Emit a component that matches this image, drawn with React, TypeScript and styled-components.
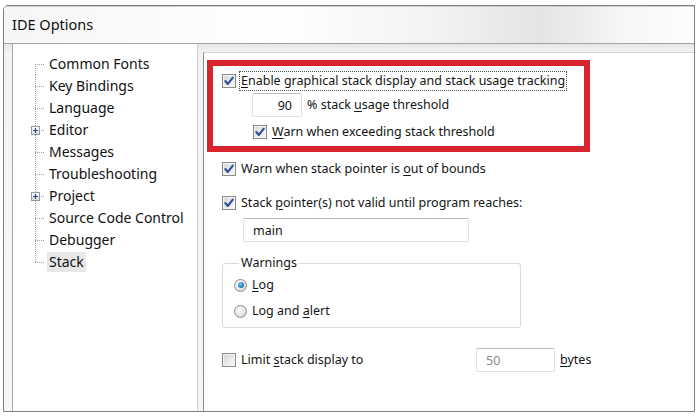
import React from "react";
import styled, { createGlobalStyle, css } from "styled-components";

const GlobalStyle = createGlobalStyle`
  html, body {
    margin: 0;
    padding: 0;
    background: #ffffff;
  }
  body {
    font-family: "Noto Sans", "Liberation Sans", sans-serif;
    color: #1c1c1c;
  }
`;

const treeItems = [
  { label: "Common Fonts" },
  { label: "Key Bindings" },
  { label: "Language" },
  { label: "Editor", expandable: true },
  { label: "Messages" },
  { label: "Troubleshooting" },
  { label: "Project", expandable: true },
  { label: "Source Code Control" },
  { label: "Debugger" },
  { label: "Stack", selected: true },
];

type Pos = "first" | "mid" | "last";

const App = () => {
  return (
    <>
      <GlobalStyle />
      <Page>
        <Dialog>
          <TitleBar>IDE Options</TitleBar>
          <Body>
            <Tree>
              {treeItems.map((item, i) => {
                const pos: Pos =
                  i === 0 ? "first" : i === treeItems.length - 1 ? "last" : "mid";
                return (
                  <TreeRow key={item.label}>
                    <Connector $pos={pos}>
                      {item.expandable && (
                        <Expander>
                          <svg width="7" height="7" viewBox="0 0 7 7">
                            <path d="M1 3.5H6M3.5 1V6" stroke="#2a4a8a" strokeWidth="1.2" />
                          </svg>
                        </Expander>
                      )}
                    </Connector>
                    <TreeLabel $selected={!!item.selected}>{item.label}</TreeLabel>
                  </TreeRow>
                );
              })}
            </Tree>

            <Panel>
              <Highlight>
                <Row>
                  <CheckBox checked />
                  <FocusLabel>
                    <Key>E</Key>nable graphical stack display and stack usage tracking
                  </FocusLabel>
                </Row>
                <Row $indent={30} $mt={2}>
                  <TextBox $width={50} $align="right">90</TextBox>
                  <Label>
                    % stack <Key>u</Key>sage threshold
                  </Label>
                </Row>
                <Row $indent={31} $mt={5}>
                  <CheckBox checked />
                  <Label>
                    <Key>W</Key>arn when exceeding stack threshold
                  </Label>
                </Row>
              </Highlight>

              <Options>
                <Row $mt={7}>
                  <CheckBox checked />
                  <Label>
                    Warn when stack pointer is <Key>o</Key>ut of bounds
                  </Label>
                </Row>
                <Row $mt={14}>
                  <CheckBox checked />
                  <Label>
                    Stack <Key>p</Key>ointer(s) not valid until program reaches:
                  </Label>
                </Row>
                <Row $indent={21} $mt={5}>
                  <TextBox $width={226}>main</TextBox>
                </Row>

                <Group>
                  <Legend>Warnings</Legend>
                  <Row>
                    <Radio checked />
                    <Label>
                      <Key>L</Key>og
                    </Label>
                  </Row>
                  <Row $mt={6}>
                    <Radio />
                    <Label>
                      Log and <Key>a</Key>lert
                    </Label>
                  </Row>
                </Group>

                <Row $mt={20}>
                  <LimitCell>
                    <CheckBox />
                    <Label>
                      Limit <Key>s</Key>tack display to
                    </Label>
                  </LimitCell>
                  <TextBox $width={79} $muted>
                    50
                  </TextBox>
                  <Label>
                    <Key>b</Key>ytes
                  </Label>
                </Row>
              </Options>
            </Panel>
          </Body>
        </Dialog>
      </Page>
    </>
  );
};

export default App;

const CheckBox = ({ checked = false }: { checked?: boolean }) => (
  <CheckFrame>
    {checked && (
      <svg width="12" height="12" viewBox="0 0 12 12">
        <path
          d="M2.3 6 L4.8 9 L9.8 2.6"
          fill="none"
          stroke="#2f4f9e"
          strokeWidth="2.1"
          strokeLinecap="round"
          strokeLinejoin="round"
        />
      </svg>
    )}
  </CheckFrame>
);

const Radio = ({ checked = false }: { checked?: boolean }) => (
  <RadioFrame>{checked && <RadioDot />}</RadioFrame>
);

const Page = styled.div`
  padding: 5px 0 0 3px;
`;

const Dialog = styled.div`
  box-sizing: border-box;
  width: 692px;
  height: 407px;
  border: 1px solid #7e7e7e;
  border-top-left-radius: 5px;
  display: flex;
  flex-direction: column;
  overflow: hidden;
  background: #f1f1f1;
`;

const TitleBar = styled.div`
  box-sizing: border-box;
  height: 38px;
  flex: none;
  display: flex;
  align-items: center;
  padding-left: 8px;
  padding-bottom: 1px;
  border-bottom: 1px solid #a4a4a4;
  font-size: 14.5px;
  color: #111111;
  background: linear-gradient(
    to right,
    #f6f6f6 0%,
    #ffffff 40%,
    #f3f3f3 62%,
    #e4e4e4 78%,
    #f7f7f7 90%,
    #fdfdfd 100%
  );
  box-shadow: inset 0 1px 0 #cfcfcf;
`;

const Body = styled.div`
  flex: 1;
  display: flex;
  padding-left: 8px;
  background: linear-gradient(#e6e6e6 0, #f3f3f3 8px, #f6f6f6 100%);
`;

const Tree = styled.div`
  box-sizing: border-box;
  width: 186px;
  flex: none;
  margin-right: 5px;
  padding: 9px 0 0 22px;
  background: #ffffff;
  border-left: 1px solid #a9a9a9;
  border-right: 1px solid #cfcfcf;
`;

const TreeRow = styled.div`
  display: flex;
  align-items: center;
  height: 22px;
`;

const dotV = "repeating-linear-gradient(to bottom, #9c9c9c 0 1px, transparent 1px 2px)";
const dotH = "repeating-linear-gradient(to right, #9c9c9c 0 1px, transparent 1px 2px)";

const Connector = styled.div<{ $pos: Pos }>`
  width: 12px;
  height: 22px;
  flex: none;
  display: flex;
  align-items: center;
  background-repeat: no-repeat;
  background-image: ${dotH}, ${dotV};
  background-size: 10px 1px,
    ${({ $pos }) => ($pos === "mid" ? "1px 22px" : $pos === "first" ? "1px 11px" : "1px 12px")};
  background-position: 0 11px,
    ${({ $pos }) => ($pos === "first" ? "0 11px" : "0 0")};
`;

const Expander = styled.div`
  box-sizing: border-box;
  width: 9px;
  height: 9px;
  margin-left: -4px;
  margin-top: 1px;
  border: 1px solid #8f9aa8;
  background: linear-gradient(#ffffff, #d9dee6);
  display: flex;
  align-items: center;
  justify-content: center;
`;

const TreeLabel = styled.span<{ $selected: boolean }>`
  font-size: 14px;
  line-height: 20px;
  padding: 0 2px;
  color: #111111;
  white-space: nowrap;
  ${({ $selected }) =>
    $selected &&
    css`
      background: #e7e7e7;
    `}
`;

const Panel = styled.div`
  flex: 1;
  margin-top: 8px;
  background: #ffffff;
  border-top: 1px solid #d4d4d4;
  border-left: 1px solid #8a8a8a;
  font-size: 12.5px;
`;

const Highlight = styled.div`
  box-sizing: border-box;
  width: 383px;
  height: 92px;
  margin: 7px 0 0 3px;
  padding: 5px 0 0 9px;
  border: 6px solid #d8242c;
`;

const Options = styled.div`
  padding-left: 18px;
`;

const Row = styled.div<{ $indent?: number; $mt?: number }>`
  display: flex;
  align-items: center;
  min-height: 20px;
  margin-left: ${({ $indent = 0 }) => $indent}px;
  margin-top: ${({ $mt = 0 }) => $mt}px;
  white-space: nowrap;
`;

const CheckFrame = styled.span`
  box-sizing: border-box;
  width: 14px;
  height: 14px;
  flex: none;
  display: flex;
  align-items: center;
  justify-content: center;
  border: 1px solid #8a8a8a;
  background: linear-gradient(135deg, #d2d2d2 0%, #ebebeb 55%, #f8f8f8 100%);
  box-shadow: inset 0 0 0 1px #f4f4f4;
`;

const RadioFrame = styled.span`
  box-sizing: border-box;
  width: 13px;
  height: 13px;
  flex: none;
  margin-left: 1px;
  border-radius: 50%;
  border: 1px solid #8b8b8b;
  background: radial-gradient(circle at 40% 35%, #ffffff 0%, #e4e4e4 55%, #c9c9c9 100%);
  display: flex;
  align-items: center;
  justify-content: center;
`;

const RadioDot = styled.span`
  width: 6px;
  height: 6px;
  border-radius: 50%;
  background: radial-gradient(circle at 40% 35%, #7fd0f0 0%, #2a8cc4 50%, #18507e 100%);
`;

const Label = styled.span`
  margin-left: 5px;
  line-height: 18px;
  color: #141414;
`;

const FocusLabel = styled(Label)`
  margin-left: 3px;
  padding: 0 1px;
  line-height: 18px;
  border: 1px dotted #4a4a4a;
`;

const Key = styled.span`
  text-decoration: underline;
  text-underline-offset: 2px;
`;

const TextBox = styled.div<{ $width: number; $align?: "left" | "right"; $muted?: boolean }>`
  box-sizing: border-box;
  width: ${({ $width }) => $width}px;
  height: 24px;
  flex: none;
  display: flex;
  align-items: center;
  justify-content: ${({ $align }) => ($align === "right" ? "flex-end" : "flex-start")};
  padding: 0 ${({ $align }) => ($align === "right" ? "9px" : "0")} 0
    ${({ $align }) => ($align === "right" ? "0" : "9px")};
  border: 1px solid #dde2e8;
  border-top-color: #b9bec6;
  border-radius: 2px;
  background: #ffffff;
  color: ${({ $muted }) => ($muted ? "#8a8a8a" : "#141414")};
`;

const Group = styled.fieldset`
  box-sizing: border-box;
  width: 299px;
  height: 72px;
  margin: 14px 0 0 0;
  padding: 5px 0 0 10px;
  border: 1px solid #d5dbe0;
  border-radius: 3px;
`;

const Legend = styled.legend`
  padding: 0 2px;
  margin-left: 6px;
  line-height: 14px;
  color: #141414;
`;

const LimitCell = styled.div`
  width: 254px;
  flex: none;
  display: flex;
  align-items: center;
`;
